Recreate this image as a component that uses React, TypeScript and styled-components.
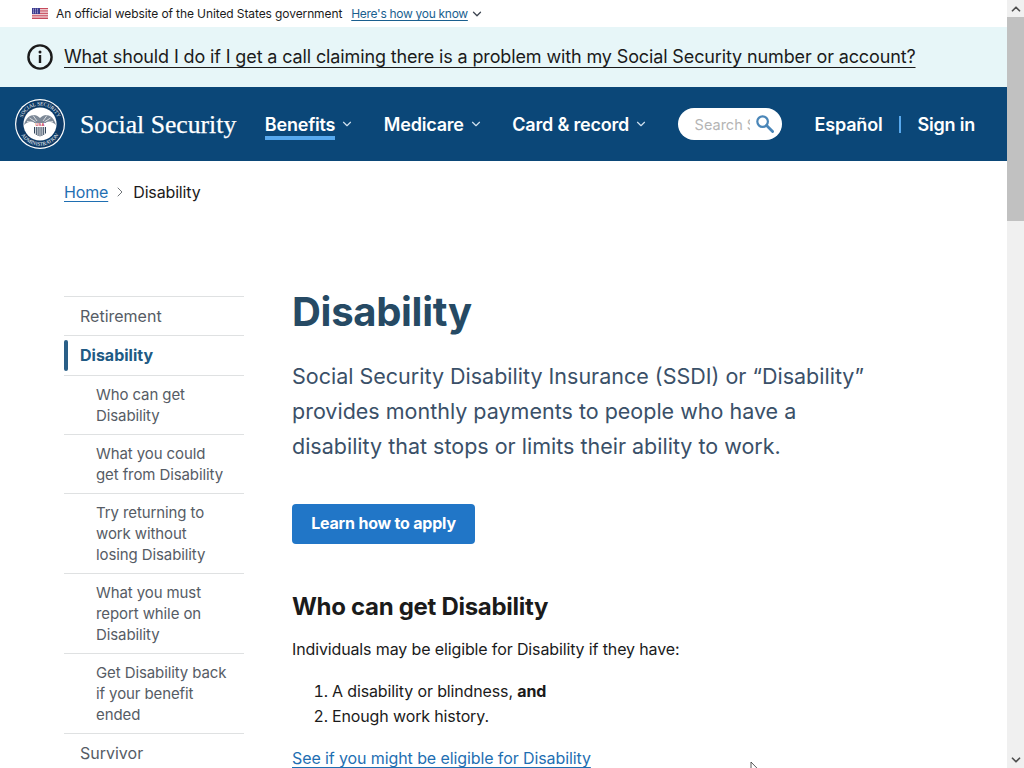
import styled, { createGlobalStyle } from 'styled-components';
import { ChevronDown, ChevronRight, ChevronUp } from 'lucide-react';

const sideItems = [
  { label: 'Retirement', level: 0 },
  { label: 'Disability', level: 0, active: true },
  { label: 'Who can get\nDisability', level: 1 },
  { label: 'What you could\nget from Disability', level: 1 },
  { label: 'Try returning to\nwork without\nlosing Disability', level: 1 },
  { label: 'What you must\nreport while on\nDisability', level: 1 },
  { label: 'Get Disability back\nif your benefit\nended', level: 1 },
  { label: 'Survivor', level: 0 },
];

const GlobalStyle = createGlobalStyle`
  html, body {
    margin: 0;
    padding: 0;
    height: 100%;
    overflow: hidden;
    background: #fff;
  }
  body {
    font-family: Inter, "Liberation Sans", sans-serif;
    color: #1b1b1b;
  }
  a { color: inherit; }
`;

const Shell = styled.div`
  display: flex;
  height: 768px;
  overflow: hidden;
`;

const Page = styled.div`
  width: 1007px;
  flex: none;
`;

const ScrollTrack = styled.div`
  width: 17px;
  flex: none;
  background: #f0f0f0;
  display: flex;
  flex-direction: column;
  justify-content: space-between;
  position: relative;
  color: #505050;
`;

const ScrollArrow = styled.div`
  height: 17px;
  display: flex;
  align-items: center;
  justify-content: center;
  background: #f0f0f0;
`;

const ScrollThumb = styled.div`
  position: absolute;
  top: 17px;
  left: 0;
  width: 17px;
  height: 204px;
  background: #c1c1c1;
`;

const GovBanner = styled.div`
  height: 27px;
  display: flex;
  align-items: center;
  padding-left: 32px;
  font-size: 12px;
  letter-spacing: -0.1px;
  color: #1b1b1b;
`;

const Flag = styled.svg`
  width: 16px;
  height: 11px;
  margin-right: 8px;
`;

const HowLink = styled.a`
  margin-left: 9px;
  color: #1a5f8f;
  letter-spacing: -0.3px;
  text-decoration: underline;
  text-underline-offset: 2px;
`;

const SmallChevron = styled(ChevronDown)`
  margin-top: 1px;
  margin-left: 2px;
  color: #3d4551;
`;

const Alert = styled.div`
  height: 60px;
  box-sizing: border-box;
  padding: 0 0 1px 27px;
  display: flex;
  align-items: center;
  background: #e7f6f8;
`;

const AlertLink = styled.a`
  margin-left: 11px;
  font-size: 18px;
  letter-spacing: -0.13px;
  color: #1b1b1b;
  text-decoration: underline;
  text-underline-offset: 4px;
  text-decoration-thickness: 1px;
`;

const NavBar = styled.header`
  height: 74px;
  display: flex;
  align-items: center;
  padding-left: 15px;
  background: #0b4778;
  color: #fff;
`;

const Wordmark = styled.span`
  margin-left: 15px;
  margin-right: 28.6px;
  padding-top: 1px;
  font-family: "Liberation Serif", serif;
  font-size: 25.7px;
  white-space: nowrap;
  -webkit-text-stroke: 0.25px #fff;
`;

const NavItem = styled.a`
  display: flex;
  align-items: center;
  margin-right: 29.5px;
  font-size: 18px;
  font-weight: 600;
  letter-spacing: -0.2px;
  color: #fff;
`;

const NavLabel = styled.span<{ $current?: boolean }>`
  padding-top: 5px;
  padding-bottom: 1px;
  border-bottom: 4px solid ${(p) => (p.$current ? '#58a9ee' : 'transparent')};
`;

const NavChevron = styled(ChevronDown)`
  margin-left: 5px;
  color: #cfe0ee;
`;

const SearchBox = styled.div`
  width: 104px;
  height: 32px;
  padding-left: 17px;
  box-sizing: border-box;
  display: flex;
  align-items: center;
  border-radius: 16px;
  background: #fff;
`;

const SearchText = styled.span`
  width: 55px;
  overflow: hidden;
  white-space: nowrap;
  font-size: 14.5px;
  color: #b5b5b5;
`;

const SearchGlyph = styled.svg`
  width: 18px;
  height: 18px;
  margin-left: 6px;
`;

const NavLinks = styled.div`
  display: flex;
  align-items: center;
  margin-left: 33px;
  font-size: 18px;
  font-weight: 600;
  letter-spacing: -0.2px;
`;

const Divider = styled.span`
  width: 2px;
  height: 17px;
  margin: 0 16px 0 17px;
  background: #58a9ee;
`;

const Crumbs = styled.nav`
  height: 135px;
  box-sizing: border-box;
  padding: 20px 0 0 64px;
  display: flex;
  align-items: flex-start;
  font-size: 16px;
  line-height: 22px;
  letter-spacing: -0.15px;
`;

const CrumbLink = styled.a`
  color: #1f6fb2;
  text-decoration: underline;
  text-underline-offset: 3px;
`;

const CrumbChevron = styled(ChevronRight)`
  margin: 3px 5px 0 4px;
  color: #71767a;
`;

const Content = styled.div`
  display: grid;
  grid-template-columns: 180px 1fr;
  column-gap: 48px;
  padding-left: 64px;
`;

const SideNav = styled.ul`
  margin: 0;
  padding: 0;
  list-style: none;
  border-top: 1px solid #dfe1e2;
`;

const SideItem = styled.li<{ $level: number; $active?: boolean }>`
  position: relative;
  box-sizing: border-box;
  padding: ${(p) => {
    if (p.$level) return '8px 8px 8px 32px';
    return p.$active ? '9px 8px 9px 16px' : '9px 8px 8px 16px';
  }};
  border-bottom: 1px solid #dfe1e2;
  font-size: ${(p) => (p.$level ? '15px' : '16px')};
  line-height: 21px;
  font-weight: ${(p) => (p.$active ? 700 : 400)};
  letter-spacing: ${(p) => (p.$level ? '-0.1px' : '0')};
  color: ${(p) => (p.$active ? '#205a84' : '#565c65')};
  white-space: pre-line;
`;

const ActiveMark = styled.span`
  position: absolute;
  left: 0;
  top: 4px;
  bottom: 4px;
  width: 4px;
  border-radius: 2px;
  background: #2a5f87;
`;

const Main = styled.main`
  width: 590px;
`;

const Title = styled.h1`
  margin: 0;
  padding-top: 1px;
  font-size: 40px;
  line-height: 30px;
  font-weight: 700;
  letter-spacing: -0.3px;
  color: #264a64;
`;

const Lead = styled.p`
  margin: 32px 0 0;
  font-size: 21.5px;
  line-height: 35px;
  color: #3a5068;
  white-space: pre-line;
`;

const ApplyButton = styled.a`
  display: inline-flex;
  align-items: center;
  justify-content: center;
  width: 183px;
  height: 40px;
  margin-top: 40px;
  padding-bottom: 2px;
  box-sizing: border-box;
  border-radius: 4px;
  background: #2176c7;
  color: #fff;
  font-size: 16px;
  font-weight: 700;
  letter-spacing: -0.2px;
`;

const SectionTitle = styled.h2`
  margin: 48px 0 0;
  font-size: 24px;
  line-height: 30px;
  font-weight: 700;
  letter-spacing: -0.3px;
  color: #1b1b1b;
`;

const Text = styled.p`
  margin: 15px 0 0;
  font-size: 16px;
  line-height: 25px;
  letter-spacing: -0.13px;
`;

const Steps = styled.ol`
  margin: 17px 0 0;
  padding-left: 40px;
  font-size: 16px;
  line-height: 25px;
  letter-spacing: -0.13px;
`;

const EligibleLink = styled.a`
  display: inline-block;
  margin-top: 17px;
  font-size: 16px;
  line-height: 25px;
  letter-spacing: -0.1px;
  color: #1f6fb2;
  text-decoration: underline;
  text-underline-offset: 3px;
`;

const Cursor = styled.svg`
  position: absolute;
  left: 750px;
  top: 762px;
  width: 10px;
  height: 14px;
`;

const SealLogo = () => (
  <svg width="50" height="50" viewBox="0 0 50 50" aria-label="Social Security Administration seal">
    <defs>
      <path id="sealTop" d="M6.4 25 A18.6 18.6 0 0 1 43.6 25" />
      <path id="sealBottom" d="M3.4 25 A21.6 21.6 0 0 0 46.6 25" />
    </defs>
    <circle cx="25" cy="25" r="25" fill="#fff" />
    <circle cx="25" cy="25" r="23.8" fill="#0d3a66" />
    <circle cx="25" cy="25" r="16.6" fill="#fff" />
    <text fill="#fff" fontFamily="Liberation Serif, serif" fontSize="5.2">
      <textPath href="#sealTop" startOffset="50%" textAnchor="middle">SOCIAL SECURITY</textPath>
    </text>
    <text fill="#fff" fontFamily="Liberation Serif, serif" fontSize="5.2">
      <textPath href="#sealBottom" startOffset="50%" textAnchor="middle">ADMINISTRATION</textPath>
    </text>
    <path d="M9 26 C11 17 19 12.5 25 19 C31 12.5 39 17 41 26 C37 22.5 33 22 31 24 H19 C17 22 13 22.5 9 26Z" fill="#7d8997" />
    <path d="M12 22.5 L19 23.5 M14.5 19 L20.5 22.8 M18 16.4 L22 22 M38 22.5 L31 23.5 M35.5 19 L29.5 22.8 M32 16.4 L28 22" stroke="#fff" strokeWidth="0.7" />
    <text x="25" y="27" textAnchor="middle" fill="#c9405a" fontFamily="Liberation Sans, sans-serif" fontSize="4.2" fontWeight="700">USA</text>
    <path d="M19.5 28 V34.5 M21.3 28 V36 M23.1 28 V37 M25 28 V37.4 M26.9 28 V37 M28.7 28 V36 M30.5 28 V34.5" stroke="#33465c" strokeWidth="1" />
  </svg>
);

const UsFlag = () => (
  <Flag viewBox="0 0 16 11">
    <rect width="16" height="11" fill="#fff" />
    <path d="M0 .5H16M0 2.2H16M0 3.9H16M0 5.6H16M0 7.3H16M0 9H16M0 10.5H16" stroke="#c0354a" strokeWidth="0.9" />
    <rect width="8" height="6" fill="#3c3b8e" />
    <path d="M1 1.2H7M1 3H7M1 4.8H7" stroke="#d9d9f0" strokeWidth="0.8" strokeDasharray="1 1" />
  </Flag>
);

const InfoIcon = () => (
  <svg width="26" height="26" viewBox="0 0 26 26">
    <circle cx="13" cy="13" r="11.6" fill="none" stroke="#1b1b1b" strokeWidth="2.4" />
    <rect x="11.8" y="11" width="2.4" height="8" fill="#1b1b1b" />
    <circle cx="13" cy="8" r="1.5" fill="#1b1b1b" />
  </svg>
);

const MagnifierIcon = () => (
  <SearchGlyph viewBox="0 0 18 18">
    <circle cx="6.6" cy="6.6" r="5.3" fill="none" stroke="#4a86b8" strokeWidth="2.2" />
    <path d="M10.6 10.6 L16.6 16.6" stroke="#4a86b8" strokeWidth="2.8" strokeLinecap="round" />
  </SearchGlyph>
);

export default function App() {
  return (
    <>
      <GlobalStyle />
      <Shell>
        <Page>
          <GovBanner>
            <UsFlag />
            An official website of the United States government
            <HowLink>Here's how you know</HowLink>
            <SmallChevron size={14} strokeWidth={2.2} />
          </GovBanner>
          <Alert>
            <InfoIcon />
            <AlertLink>What should I do if I get a call claiming there is a problem with my Social Security number or account?</AlertLink>
          </Alert>
          <NavBar>
            <SealLogo />
            <Wordmark>Social Security</Wordmark>
            <NavItem>
              <NavLabel $current>Benefits</NavLabel>
              <NavChevron size={14} strokeWidth={2} />
            </NavItem>
            <NavItem>
              <NavLabel>Medicare</NavLabel>
              <NavChevron size={14} strokeWidth={2} />
            </NavItem>
            <NavItem>
              <NavLabel>Card &amp; record</NavLabel>
              <NavChevron size={14} strokeWidth={2} />
            </NavItem>
            <SearchBox>
              <SearchText>Search SSA.gov</SearchText>
              <MagnifierIcon />
            </SearchBox>
            <NavLinks>
              Español
              <Divider />
              Sign in
            </NavLinks>
          </NavBar>
          <Crumbs>
            <CrumbLink>Home</CrumbLink>
            <CrumbChevron size={16} strokeWidth={1.5} />
            Disability
          </Crumbs>
          <Content>
            <SideNav>
              {sideItems.map((item) => (
                <SideItem key={item.label} $level={item.level} $active={item.active}>
                  {item.active && <ActiveMark />}
                  {item.label}
                </SideItem>
              ))}
            </SideNav>
            <Main>
              <Title>Disability</Title>
              <Lead>{'Social Security Disability Insurance (SSDI) or “Disability”\nprovides monthly payments to people who have a\ndisability that stops or limits their ability to work.'}</Lead>
              <ApplyButton>Learn how to apply</ApplyButton>
              <SectionTitle>Who can get Disability</SectionTitle>
              <Text>Individuals may be eligible for Disability if they have:</Text>
              <Steps>
                <li>A disability or blindness, <strong>and</strong></li>
                <li>Enough work history.</li>
              </Steps>
              <EligibleLink>See if you might be eligible for Disability</EligibleLink>
            </Main>
          </Content>
        </Page>
        <ScrollTrack>
          <ScrollArrow><ChevronUp size={14} strokeWidth={3} /></ScrollArrow>
          <ScrollThumb />
          <ScrollArrow><ChevronDown size={14} strokeWidth={3} /></ScrollArrow>
        </ScrollTrack>
        <Cursor viewBox="0 0 10 14">
          <path d="M1 0 V11 L3.6 8.6 L5.4 13 L7 12.3 L5.2 8 H8.8Z" fill="#fff" stroke="#333" strokeWidth="0.8" />
        </Cursor>
      </Shell>
    </>
  );
}
